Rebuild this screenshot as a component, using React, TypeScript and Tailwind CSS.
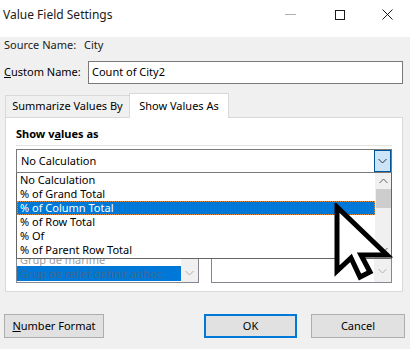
import React from 'react';

const font = { fontFamily: '"Segoe UI", "Noto Sans", sans-serif' };

const Chevron: React.FC<{ up?: boolean; className?: string }> = ({ up, className }) => (
  <svg width="9" height="6" viewBox="0 0 9 6" className={className}>
    <path d={up ? 'M0.5 5 L4.5 1 L8.5 5' : 'M0.5 1 L4.5 5 L8.5 1'} fill="none" stroke="currentColor" strokeWidth="1" />
  </svg>
);

const items = ['No Calculation', '% of Grand Total', '% of Column Total', '% of Row Total', '% Of', '% of Parent Row Total'];

const App: React.FC = () => {
  return (
    <div className="w-[410px] h-[349px] relative overflow-hidden bg-white text-[11px] text-[#000]" style={font}>
      {/* Title bar */}
      <div className="h-[29px] flex items-center bg-white">
        <div className="pl-[3px] text-[12px] text-[#1a1a1a] flex-1">Value Field Settings</div>
        <div className="w-[49px] flex justify-center">
          <div className="w-[11px] h-px bg-[#b0b0b0]" />
        </div>
        <div className="w-[49px] flex justify-center">
          <div className="w-[10px] h-[10px] border border-[#1a1a1a]" />
        </div>
        <div className="w-[46px] flex justify-center">
          <svg width="11" height="11" viewBox="0 0 11 11">
            <path d="M0.5 0.5 L10.5 10.5 M10.5 0.5 L0.5 10.5" stroke="#1a1a1a" strokeWidth="1" />
          </svg>
        </div>
      </div>

      {/* Body */}
      <div className="h-[315px] bg-[#f0f0f0] border-b border-[#a0a0a0] pr-[7px]">
        <div className="flex items-center h-[16px] mt-[8px] pl-[4px] text-[#1a1a1a]">
          <span className="w-[80px]">Source Name:</span>
          <span>City</span>
        </div>
        <div className="flex items-center mt-[8px] pl-[4px]">
          <span className="w-[84px]"><span className="underline">C</span>ustom Name:</span>
          <div className="flex-1 h-[23px] bg-white border border-[#7a7a7a] flex items-center pl-[3px]">Count of City2</div>
        </div>

        {/* Tabs */}
        <div className="flex items-end h-[25px] mt-[8px] pl-[5px]">
          <div className="w-[124px] h-[22px] flex items-center justify-center border-t border-l border-[#d9d9d9]">Summarize Values By</div>
          <div className="w-[100px] h-[25px] flex items-center justify-center bg-white border border-b-0 border-[#d9d9d9] relative z-10 -mb-px">Show Values As</div>
        </div>

        {/* Panel */}
        <div className="ml-[5px] h-[175px] bg-white border border-[#d9d9d9] px-[10px]">
          <div className="font-bold mt-[8px] h-[16px] flex items-center">
            <span>Show v<span className="underline">a</span>lues as</span>
          </div>
          <div className="h-px bg-[#e3e3e3] mt-[3px]" />
          <div className="relative mt-[3px]">
            <div className="h-[24px] border border-[#7a7a7a] flex items-center bg-white">
              <span className="flex-1 pl-[4px]">No Calculation</span>
              <div className="w-[17px] h-[22px] bg-[#cce4f7] border border-[#005499] flex items-center justify-center text-[#333]">
                <Chevron />
              </div>
            </div>

            {/* Lists behind the dropdown */}
            <div className="flex gap-[12px] mt-[55px]">
              <div className="w-[183px] h-[55px] border border-[#828790] bg-white flex">
                <div className="flex-1 flex flex-col justify-end text-[#a0a0a0]">
                  <div className="h-[14px] leading-[12px] pl-[3px] flex items-end">Grup de marime</div>
                  <div className="h-[15px] leading-[15px] pl-[3px] bg-[#0078d7] text-[#3f6790] mb-px">Grup de relief definit adhoc</div>
                </div>
                <div className="w-[17px] bg-[#f0f0f0] flex flex-col justify-end items-center pb-[6px] text-[#b0b0b0]">
                  <Chevron />
                </div>
              </div>
              <div className="flex-1 h-[25px] self-end border border-[#828790] bg-white flex justify-end">
                <div className="w-[17px] bg-[#f0f0f0] flex flex-col justify-end items-center pb-[8px] text-[#b0b0b0]">
                  <Chevron />
                </div>
              </div>
            </div>

            {/* Dropdown list */}
            <div className="absolute left-0 right-0 top-[24px] h-[86px] bg-white border border-[#646464] border-t-0 flex z-20">
              <div className="flex-1">
                {items.map((it, i) => (
                  <div
                    key={it}
                    className={
                      i === 2
                        ? 'h-[14px] leading-[14px] pl-[3px] bg-[#0078d7] text-white outline outline-1 outline-dotted outline-[#e08a3c] -outline-offset-1'
                        : 'h-[14px] leading-[14px] pl-[3px]'
                    }
                  >
                    {it}
                  </div>
                ))}
              </div>
              <div className="w-[16px] bg-[#f0f0f0] flex flex-col items-center text-[#606060]">
                <div className="h-[16px] flex items-center"><Chevron up /></div>
                <div className="w-[15px] h-[19px] bg-[#cdcdcd]" />
                <div className="flex-1" />
                <div className="h-[16px] flex items-center"><Chevron /></div>
              </div>
            </div>
          </div>
        </div>

        {/* Buttons */}
        <div className="flex items-center mt-[22px] pl-[4px]">
          <button className="w-[100px] h-[24px] bg-[#e1e1e1] border border-[#adadad]"><span className="underline">N</span>umber Format</button>
          <div className="flex-1" />
          <button className="w-[93px] h-[24px] bg-[#e1e1e1] border-2 border-[#0078d7]">OK</button>
          <button className="w-[94px] h-[24px] bg-[#e1e1e1] border border-[#adadad] ml-[14px] mr-[-2px]">Cancel</button>
        </div>
      </div>

      {/* Spreadsheet behind */}
      <div className="flex h-[5px]">
        <div className="w-[13px] border-r border-[#d4d4d4]" />
        {[0, 1, 2, 3, 4].map((i) => (
          <div key={i} className="w-[67px] border-r border-[#d4d4d4]" />
        ))}
      </div>

      {/* Mouse cursor */}
      <svg className="absolute left-[333px] top-[203px] z-30" width="62" height="80" viewBox="-4 -4 62 80">
        <path
          d="M0 0 V64 L14 51 L23 70 L33 65 L24 48 H50 Z"
          fill="white"
          stroke="black"
          strokeWidth="5"
        />
      </svg>
    </div>
  );
};

export default App;
